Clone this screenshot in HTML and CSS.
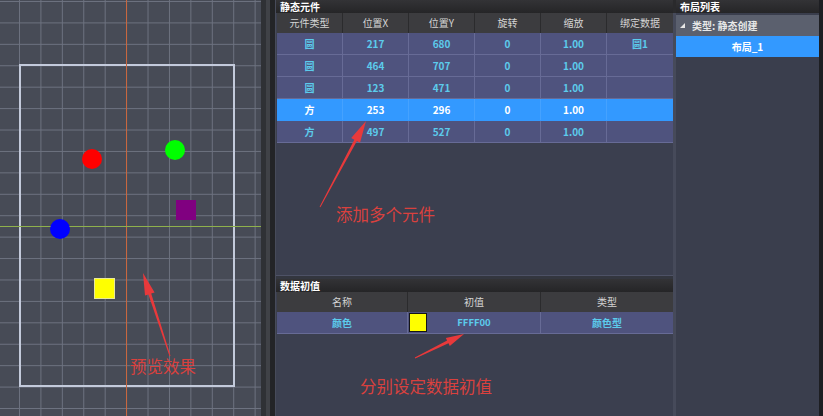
FILE: index.html
```html
<!DOCTYPE html>
<html lang="zh">
<head>
<meta charset="utf-8">
<title>布局编辑</title>
<link rel="stylesheet" href="styles.css">
</head>
<body>
<div class="app">
  <div class="canvas">
    <div class="frame"></div>
    <div class="axis-v"></div>
    <div class="axis-h"></div>
    <div class="shape circle red"></div>
    <div class="shape circle green"></div>
    <div class="shape square purple"></div>
    <div class="shape circle blue"></div>
    <div class="shape square yellow"></div>
  </div>
  <div class="gutter"><span class="g1"></span><span class="g2"></span><span class="g3"></span></div>
  <div class="center">
    <section class="panel upper">
      <div class="title">静态元件</div>
      <div class="row six head">
        <div>元件类型</div><div>位置X</div><div>位置Y</div><div>旋转</div><div>缩放</div><div>绑定数据</div>
      </div>
      <div class="row six data">
        <div>圆</div><div>217</div><div>680</div><div>0</div><div>1.00</div><div>圆1</div>
      </div>
      <div class="row six data">
        <div>圆</div><div>464</div><div>707</div><div>0</div><div>1.00</div><div></div>
      </div>
      <div class="row six data">
        <div>圆</div><div>123</div><div>471</div><div>0</div><div>1.00</div><div></div>
      </div>
      <div class="row six data selected">
        <div>方</div><div>253</div><div>296</div><div>0</div><div>1.00</div><div></div>
      </div>
      <div class="row six data">
        <div>方</div><div>497</div><div>527</div><div>0</div><div>1.00</div><div></div>
      </div>
    </section>
    <div class="gap"></div>
    <section class="panel lower">
      <div class="title">数据初值</div>
      <div class="row three head">
        <div>名称</div><div>初值</div><div>类型</div>
      </div>
      <div class="row three data">
        <div>颜色</div>
        <div class="value"><span class="swatch"></span><span class="hex">FFFF00</span></div>
        <div>颜色型</div>
      </div>
    </section>
  </div>
  <div class="sep"></div>
  <div class="right">
    <div class="title">布局列表</div>
    <div class="tree">
      <div class="node group"><svg class="tri" width="5" height="5" viewBox="0 0 5 5"><polygon points="5,0 5,5 0,5" fill="#e6e6e6"/></svg><span>类型: 静态创建</span></div>
      <div class="node leaf">布局_1</div>
    </div>
  </div>
  <div class="edge"></div>
</div>

<svg class="arrows" width="823" height="416" viewBox="0 0 823 416">
  <polygon points="320.4,207.2 356.9,141.1 360.0,142.8 366,121 351.2,138.0 354.3,139.7 319.6,206.8"/>
  <polygon points="415.2,358.4 448.5,343.2 449.8,345.9 464,334 445.8,337.9 447.1,340.6 414.8,357.6"/>
  <polygon points="170.5,355.8 151.2,293.4 154.6,292.4 143,273 145.0,295.4 148.4,294.4 169.5,356.2"/>
</svg>
<div class="note n1">添加多个元件</div>
<div class="note n2">分别设定数据初值</div>
<div class="note n3">预览效果</div>
</body>
</html>
```

FILE: styles.css
```css
* { box-sizing: border-box; margin: 0; padding: 0; }
html, body { width: 823px; height: 416px; overflow: hidden; }
body {
  position: relative;
  background: #1f2024;
  font-family: "Noto Sans CJK SC", "Noto Sans", sans-serif;
  font-size: 10px;
}
.app { display: flex; height: 416px; }

/* ---------- canvas ---------- */
.canvas {
  position: relative;
  flex: none;
  width: 261px;
  overflow: hidden;
  background-color: #474b56;
  background-image:
    linear-gradient(to right, #6d7280 1px, transparent 1px),
    linear-gradient(to bottom, #6d7280 1px, transparent 1px);
  background-size: 21.43px 21.43px;
  background-position: 19px 1px;
}
.frame {
  position: absolute;
  left: 19px; top: 64px;
  width: 216px; height: 323px;
  border: 2px solid #c3cadb;
}
.axis-v {
  position: absolute;
  left: 126px; top: 0;
  width: 1px; height: 100%;
  background: #c8673f;
}
.axis-h {
  position: absolute;
  left: 0; top: 226px;
  width: 100%; height: 1px;
  background: #8fb14c;
}
.shape { position: absolute; width: 20px; height: 20px; }
.circle { border-radius: 50%; }
.red { left: 82px; top: 149px; background: #ff0000; }
.green { left: 165px; top: 140px; background: #00ff00; }
.blue { left: 50px; top: 219px; background: #0000ff; }
.purple { left: 176px; top: 200px; background: #800080; }
.yellow { left: 94px; top: 278px; width: 21px; height: 21px; background: #ffff00; border: 1px solid #e8e89a; }

/* ---------- gutter ---------- */
.gutter { display: flex; flex: none; width: 14px; }
.g1 { width: 5px; background: #2f3135; }
.g2 { width: 4px; background: #404247; }
.g3 { width: 5px; background: #232427; }

/* ---------- center ---------- */
.center {
  flex: none;
  width: 398px;
  display: flex;
  flex-direction: column;
  border-left: 1px solid #474b5a;
  background: #3a3e4d;
}
.panel { background: #3b3f4f; }
.upper { height: 276px; border-bottom: 1px solid #4e5266; }
.gap { height: 3px; background: #33363f; }
.lower { flex: 1; }

.title {
  height: 13px;
  line-height: 14.5px;
  padding-left: 4px;
  color: #ffffff;
  font-weight: bold;
  font-size: 10px;
  background: linear-gradient(#333336, #252527);
}

.row { display: grid; margin-left: 1px; text-align: center; }
.six { grid-template-columns: repeat(6, 1fr); }
.three { grid-template-columns: 131px 133px 1fr; }
.head {
  height: 20px;
  line-height: 20px;
  background: #3c3c3f;
  color: #d4d4d4;
}
.head > div { border-right: 1px solid #2b2b2d; }
.head > div:last-child { border-right: none; }
.data {
  height: 22px;
  line-height: 21px;
  background: #4f537e;
  border-bottom: 1px solid #676b96;
  color: #5ccbec;
  font-weight: bold;
}
.data > div { border-right: 1px solid #676b96; }
.data > div:last-child { border-right: none; }
.data.selected { background: #3399ff; color: #ffffff; border-bottom-color: #3399ff; }
.data.selected > div { border-right-color: #45a2ff; }

.value { display: flex; align-items: center; }
.swatch {
  flex: none;
  width: 18px; height: 19px;
  margin-left: 1px;
  background: #ffff00;
  border: 1px solid #151515;
}
.hex { flex: 1; text-align: center; margin-right: 19px; font-size: 9.5px; }

/* ---------- separator / right ---------- */
.sep {
  flex: none;
  width: 3px;
  background: linear-gradient(#2a2a2c 0 13px, #464a5a 13px);
}
.right {
  flex: none;
  width: 143px;
  background: #3a3e4d;
}
.tree { padding-top: 2px; }
.node {
  height: 21px;
  line-height: 21px;
  font-weight: bold;
  color: #e8e8e8;
}
.group {
  display: flex;
  align-items: center;
  gap: 7px;
  padding-left: 4px;
  background: #5b606e;
}
.tri { flex: none; }
.leaf {
  background: #3399ff;
  color: #ffffff;
  text-align: center;
}
.edge { flex: 1; background: #1d1e22; }

/* ---------- annotations ---------- */
.arrows {
  position: absolute;
  left: 0; top: 0;
  pointer-events: none;
  fill: #e8393b;
}
.note {
  position: absolute;
  color: #d9413e;
  font-size: 16.5px;
  line-height: 17px;
  white-space: nowrap;
}
.n1 { left: 336px; top: 206px; }
.n2 { left: 360px; top: 378px; }
.n3 { left: 130px; top: 358px; }
```
